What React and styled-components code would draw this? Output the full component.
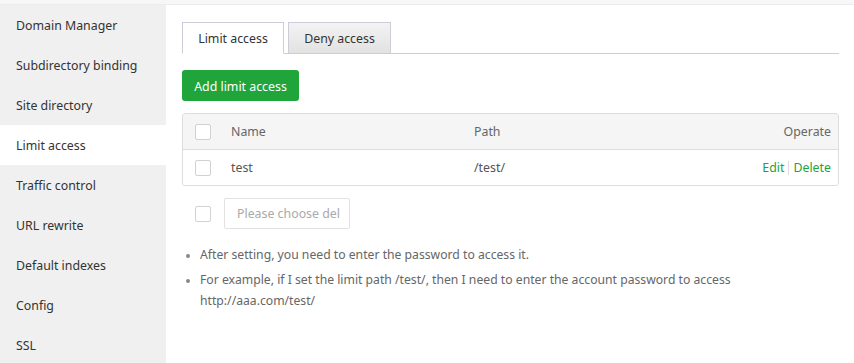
import React from "react";
import styled, { createGlobalStyle } from "styled-components";

const Global = createGlobalStyle`
  html, body { margin: 0; padding: 0; background: #fff; }
  body { font-family: "Noto Sans", "Open Sans", Arial, sans-serif; color: #333; }
`;

const Page = styled.div`
  width: 854px;
  height: 363px;
  display: flex;
  flex-direction: column;
  overflow: hidden;
`;

const TopStrip = styled.div`
  height: 4px;
  background: #f7f7f7;
  border-bottom: 1px solid #ececec;
`;

const Body = styled.div`
  flex: 1;
  display: flex;
  min-height: 0;
`;

const Sidebar = styled.ul`
  list-style: none;
  margin: 0;
  padding: 0;
  width: 166px;
  background: #f0f0f0;
`;

const NavItem = styled.li`
  box-sizing: border-box;
  height: 40px;
  padding-top: 1px;
  line-height: 39px;
  padding-left: 16px;
  font-size: 12.35px;
  color: #333;
  background: ${(p) => (p.$active ? "#fff" : "transparent")};
`;

const Main = styled.div`
  flex: 1;
  padding: 17px 15px 0 16px;
  display: flex;
  flex-direction: column;
`;

const Tabs = styled.div`
  display: flex;
  gap: 4px;
  border-bottom: 1px solid #cfcbd8;
  height: 31px;
`;

const Tab = styled.div`
  box-sizing: border-box;
  height: 32px;
  width: ${(p) => p.$w}px;
  text-align: center;
  padding-top: 1px;
  line-height: 29px;
  font-size: 12.35px;
  color: #333;
  border: 1px solid #cfcbd8;
  border-bottom: ${(p) => (p.$active ? "1px solid #fff" : "1px solid #cfcbd8")};
  background: ${(p) => (p.$active ? "#fff" : "linear-gradient(#f3f3f3, #e2e2e2)")};
`;

const AddButton = styled.button`
  align-self: flex-start;
  margin-top: 16px;
  height: 31px;
  width: 117px;
  border: none;
  border-radius: 3px;
  background: #20a53a;
  color: #fff;
  font-family: inherit;
  font-size: 12.35px;
  padding: 1px 0 0;
`;

const Table = styled.div`
  margin-top: 12px;
  border: 1px solid #dddddd;
  border-radius: 3px;
  overflow: hidden;
`;

const Row = styled.div`
  display: grid;
  grid-template-columns: 36px 243px 1fr auto;
  align-items: center;
  height: 35px;
  padding-left: 12px;
  padding-right: 7px;
  background: ${(p) => (p.$head ? "#f5f5f5" : "#fff")};
  border-bottom: ${(p) => (p.$head ? "1px solid #dddddd" : "none")};
  font-size: 12.35px;
  color: ${(p) => (p.$head ? "#666" : "#555")};
`;

const Check = styled.span`
  display: block;
  box-sizing: border-box;
  width: 16px;
  height: 16px;
  border: 1px solid #d2d2d2;
  border-radius: 2px;
  background: #fff;
`;

const Ops = styled.div`
  display: flex;
  align-items: center;
  color: #20a53a;
`;

const Sep = styled.span`
  width: 1px;
  height: 14px;
  background: #ddd;
  margin: 0 4px;
`;

const BatchBar = styled.div`
  display: flex;
  align-items: center;
  gap: 13px;
  margin-top: 12px;
  padding-left: 13px;
`;

const SelectBox = styled.div`
  box-sizing: border-box;
  width: 126px;
  height: 31px;
  border: 1px solid #e2e2e2;
  border-radius: 2px;
  line-height: 29px;
  padding-left: 12px;
  font-size: 12.35px;
  color: #aaa;
`;

const Tips = styled.ul`
  margin: 15px 0 0;
  padding-left: 18px;
  max-width: 600px;
  font-size: 12.2px;
  color: #666;
  line-height: 21px;
  li { margin-bottom: 4px; }
  li::marker { color: #888; font-size: 10px; }
`;

const nav = [
  "Domain Manager",
  "Subdirectory binding",
  "Site directory",
  "Limit access",
  "Traffic control",
  "URL rewrite",
  "Default indexes",
  "Config",
  "SSL",
];

export default function App() {
  return (
    <Page>
      <Global />
      <TopStrip />
      <Body>
        <Sidebar>
          {nav.map((n) => (
            <NavItem key={n} $active={n === "Limit access"}>
              {n}
            </NavItem>
          ))}
        </Sidebar>
        <Main>
          <Tabs>
            <Tab $active $w={102}>Limit access</Tab>
            <Tab $w={103}>Deny access</Tab>
          </Tabs>
          <AddButton>Add limit access</AddButton>
          <Table>
            <Row $head>
              <Check />
              <span>Name</span>
              <span>Path</span>
              <span>Operate</span>
            </Row>
            <Row>
              <Check />
              <span>test</span>
              <span>/test/</span>
              <Ops>
                <span>Edit</span>
                <Sep />
                <span>Delete</span>
              </Ops>
            </Row>
          </Table>
          <BatchBar>
            <Check />
            <SelectBox>Please choose del</SelectBox>
          </BatchBar>
          <Tips>
            <li>After setting, you need to enter the password to access it.</li>
            <li>
              For example, if I set the limit path /test/, then I need to enter the account password to access
              http://aaa.com/test/
            </li>
          </Tips>
        </Main>
      </Body>
    </Page>
  );
}
